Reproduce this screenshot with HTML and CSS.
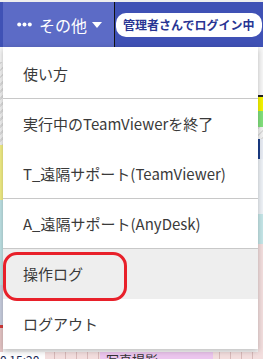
FILE: index.html
```html
<!DOCTYPE html>
<html lang="ja">

<head>
    <meta charset="utf-8">
    <title>その他メニュー</title>
    <link rel="stylesheet" href="styles.css">
</head>

<body>
    <div class="topline"></div>
    <header class="topbar">
        <button type="button" class="more">
            <svg class="dots" width="15" height="5" viewBox="0 0 15 5">
                <circle cx="2.2" cy="2.5" r="2" fill="#fff"/>
                <circle cx="7.5" cy="2.5" r="2" fill="#fff"/>
                <circle cx="12.8" cy="2.5" r="2" fill="#fff"/>
            </svg>
            <span>その他</span>
            <svg class="caret" width="10" height="6" viewBox="0 0 10 6">
                <path d="M0 0 L10 0 L5 6 Z" fill="#fff"/>
            </svg>
        </button>
        <span class="badge">管理者さんでログイン中</span>
    </header>

    <div id="calendar">
        <div class="side-left">
            <div class="c-white"></div>
            <div class="c-gray"></div>
            <div class="c-yellow"></div>
            <div class="c-cyan"></div>
            <div class="c-mix"></div>
            <div class="c-red"></div>
        </div>
        <div class="grid"></div>
        <div class="side-right">
            <div class="c-white r1"></div>
            <div class="c-line"></div>
            <div class="c-yellow r2"></div>
            <div class="c-green"></div>
            <div class="c-gray r3"></div>
            <div class="c-num"></div>
            <div class="c-light"></div>
            <div class="c-cyan r4"></div>
            <div class="c-pink"></div>
        </div>
    </div>
    <div class="bottomrow">
        <span class="time">0 15:20</span>
        <span class="event">写真撮影</span>
    </div>

    <ul class="menu">
        <li class="item sep">使い方</li>
        <li class="item">実行中のTeamViewerを終了</li>
        <li class="item sep">T_遠隔サポート(TeamViewer)</li>
        <li class="item sep">A_遠隔サポート(AnyDesk)</li>
        <li class="item active">操作ログ</li>
        <li class="item">ログアウト</li>
    </ul>
    <div class="mark"></div>
</body>

</html>
```

FILE: styles.css
```css
* {
    box-sizing: border-box;
}

body {
    margin: 0;
    width: 263px;
    height: 359px;
    overflow: hidden;
    background-color: #f3dede;
    font-family: "Noto Sans CJK JP", "Noto Sans", sans-serif;
    position: relative;
}

.topline {
    height: 2px;
    background-color: #eeeeee;
}

.topbar {
    display: flex;
    align-items: center;
    height: 45px;
    background-color: #3f51b5;
    padding-left: 3px;
}

.more {
    display: flex;
    align-items: center;
    height: 45px;
    width: 112px;
    padding: 0 0 0 14px;
    border: none;
    border-right: 1px solid #111;
    background-color: #5c6bc6;
    color: #fff;
    font-family: inherit;
    font-size: 16px;
}

.more .dots {
    margin-right: 7px;
}

.more .caret {
    margin-left: 5px;
}

.badge {
    margin-left: 1px;
    height: 24px;
    line-height: 24px;
    padding: 0 8px 0 7px;
    border-radius: 10px;
    background-color: #fff;
    color: #283593;
    font-size: 12px;
    font-weight: bold;
    white-space: nowrap;
}

#calendar {
    display: flex;
    height: 305px;
}

.side-left {
    width: 3px;
    display: flex;
    flex-direction: column;
}

.side-left div,
.side-right div {
    flex: none;
}

.c-white {
    height: 15px;
    background-color: #f7f7f7;
}

.c-gray {
    height: 83px;
    background: repeating-linear-gradient(135deg, #ddd 0 2px, #f2f2f2 2px 5px);
}

.c-yellow {
    height: 55px;
    background-color: #f3ef86;
}

.c-cyan {
    height: 85px;
    background-color: #bfe3e6;
}

.c-mix {
    height: 40px;
    background-color: #c9cfe0;
}

.c-red {
    height: 27px;
    background-color: #e7c7c7;
    border-top: 3px solid #d53a3a;
}

.grid {
    flex: 1;
    background-color: #f8f8f8;
}

.side-right {
    width: 5px;
    display: flex;
    flex-direction: column;
}

.r1 {
    height: 48px;
    background-color: #f7f7f7;
}

.c-line {
    height: 2px;
    background-color: #222;
}

.r2 {
    height: 14px;
    background-color: #f5f500;
}

.c-green {
    height: 16px;
    background-color: #82e07c;
}

.r3 {
    height: 12px;
    background-color: #d9d9d9;
}

.c-num {
    height: 20px;
    background-color: #e8ecf4;
    border-left: 2px solid #1b3d8a;
}

.c-light {
    height: 55px;
    background-color: #eef2f7;
}

.r4 {
    height: 30px;
    background-color: #c5e6e8;
}

.c-pink {
    height: 108px;
    background: repeating-linear-gradient(90deg, #f3dede 0 12px, #caa 12px 13px);
}

.bottomrow {
    display: flex;
    align-items: flex-start;
    height: 7px;
    background: repeating-linear-gradient(90deg, #f3dede 0 10px, #d8b9b9 10px 11px);
}

.time {
    width: 45px;
    height: 7px;
    padding-top: 1px;
    font-size: 12px;
    line-height: 14px;
    color: #1b2a57;
    background-color: #fff;
}

.event {
    margin-left: 55px;
    width: 113px;
    height: 7px;
    padding-left: 6px;
    background-color: #ecc6ee;
    color: #333;
    font-size: 13px;
    line-height: 16px;
}

.menu {
    position: absolute;
    top: 47px;
    left: 3px;
    width: 255px;
    margin: 0;
    padding: 2px 0 0;
    list-style: none;
    background-color: #fff;
    box-shadow: 0 2px 6px rgb(0 0 0 / 25%);
}

.item {
    height: 50px;
    line-height: 50px;
    padding-left: 20px;
    font-size: 15px;
    color: #3a3a3a;
    white-space: nowrap;
}

.item.sep {
    border-bottom: 1px solid #c8c8c8;
}

.item.active {
    background-color: #eeeeee;
}

.mark {
    position: absolute;
    top: 252px;
    left: 3px;
    width: 124px;
    height: 49px;
    border: 3px solid #e8202a;
    border-radius: 14px;
}
```
